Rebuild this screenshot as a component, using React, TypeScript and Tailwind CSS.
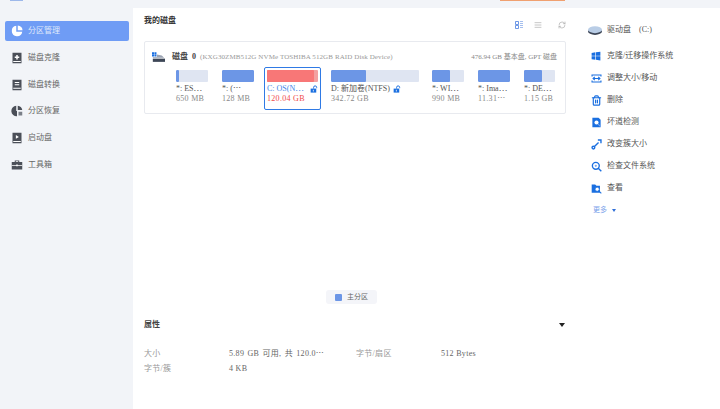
import { Trash2, RefreshCw, AlignJustify } from 'lucide-react'
import type { ReactNode } from 'react'

const cjk = 'font-["Liberation_Serif","Noto_Sans_CJK_SC",serif]'

function Sq({ children }: { children: ReactNode }) {
  return (
    <svg viewBox="0 0 16 16" className="h-[12px] w-[12px] shrink-0">
      {children}
    </svg>
  )
}

function OpenLock() {
  return (
    <svg viewBox="0 0 10 10" className="h-[8px] w-[8px] shrink-0">
      <path d="M4.5 4.5V3a1.9 1.9 0 0 1 3.8 0v1" fill="none" stroke="#1a6fe0" strokeWidth="1.2" />
      <path d="M0.8 4.5h7v5h-7z" fill="#1a6fe0" />
      <path d="M3.6 6h1v2h-1z" fill="#fff" />
    </svg>
  )
}

const navItems: { label: string; active?: boolean; icon: ReactNode }[] = [
  {
    label: '分区管理',
    active: true,
    icon: (
      <svg viewBox="0 0 16 16" className="h-[12px] w-[12px]">
        <path d="M7 1a7 7 0 1 0 8 8H7z" fill="#fff" />
        <path d="M9 0.6V7h6.4A7 7 0 0 0 9 0.6z" fill="#fff" />
      </svg>
    ),
  },
  {
    label: '磁盘克隆',
    icon: (
      <Sq>
        <path d="M2 1h12v14H2z" fill="#4b4f58" />
        <path d="M7 4h2v2h2v2H9v2H7V8H5V6h2zM3 12h10v1.4H3z" fill="#fff" />
      </Sq>
    ),
  },
  {
    label: '磁盘转换',
    icon: (
      <Sq>
        <path d="M2 1h12v14H2z" fill="#4b4f58" />
        <path d="M5 4h6v1.4H5zM5 7h6v1.4H5zM3 11.5h10V13H3z" fill="#fff" />
      </Sq>
    ),
  },
  {
    label: '分区恢复',
    icon: (
      <Sq>
        <path d="M7 1a7 7 0 1 0 1 14V8H7z" fill="#4b4f58" />
        <path d="M9 1v5.5h6A7 7 0 0 0 9 1z" fill="#4b4f58" />
        <path d="M10 9h5v5h-5z" fill="#7a7f88" />
      </Sq>
    ),
  },
  {
    label: '启动盘',
    icon: (
      <Sq>
        <path d="M2 1h12v14H2z" fill="#4b4f58" />
        <path d="M6.5 4l4 2.5-4 2.5zM3 12h10v1.4H3z" fill="#fff" />
      </Sq>
    ),
  },
  {
    label: '工具箱',
    icon: (
      <Sq>
        <path d="M5 2h6v2h4v10H1V4h4z" fill="#4b4f58" />
        <path d="M6.4 3h3.2v1H6.4zM1 8h14v1H1zM7 7.4h2v2.4H7z" fill="#fff" />
      </Sq>
    ),
  },
]

const partitions = [
  { name: '*: ES⋯', size: '650 MB', w: 'w-[32px]', fill: 'w-[3px]' },
  { name: '*: (⋯', size: '128 MB', w: 'w-[32px]', fill: 'w-full' },
]

const partitionsRight = [
  { name: '*: WI⋯', size: '990 MB', w: 'w-[32px]', fill: 'w-[18px]', gap: 'ml-[13px]' },
  { name: '*: Ima⋯', size: '11.31⋯', w: 'w-[32px]', fill: 'w-full', gap: 'ml-[14px]' },
  { name: '*: DE⋯', size: '1.15 GB', w: 'w-[31px]', fill: 'w-[18px]', gap: 'ml-[14px]' },
]

function Partition({ name, size, w, fill, className = '' }: { name: string; size: string; w: string; fill: string; className?: string }) {
  return (
    <div className={`${w} ${className} shrink-0`}>
      <div className="h-[12px] overflow-hidden rounded-[1px] bg-[#dfe5f2]">
        <div className={`h-full rounded-[1px] bg-[#6c96e6] ${fill}`} />
      </div>
      <div className="mt-[1px] whitespace-nowrap text-[8px] leading-[11px] text-[#555]">{name}</div>
      <div className="mt-[-1px] whitespace-nowrap text-[8px] leading-[11px] tracking-[0.3px] text-[#888]">{size}</div>
    </div>
  )
}

const actions: { label: string; icon: ReactNode }[] = [
  {
    label: '克隆/迁移操作系统',
    icon: (
      <svg viewBox="0 0 16 16" className="h-[10px] w-[10px]">
        <path d="M1 3l6-1v5.5H1zM8 2l7-1v6.5H8zM1 8.5h6V14l-6-1zM8 8.5h7V15l-7-1z" fill="#1a6fe0" />
      </svg>
    ),
  },
  {
    label: '调整大小/移动',
    icon: (
      <svg viewBox="0 0 16 16" className="h-[11px] w-[11px]" fill="none" stroke="#1a6fe0" strokeWidth="1.6">
        <path d="M1.5 5V3h13v2M1.5 11v2h13v-2" />
        <path d="M3 8h10M5.5 5.5 3 8l2.5 2.5M10.5 5.5 13 8l-2.5 2.5" />
      </svg>
    ),
  },
  { label: '删除', icon: <Trash2 className="h-[11px] w-[11px] text-[#1a6fe0]" strokeWidth={2.6} /> },
  {
    label: '坏道检测',
    icon: (
      <svg viewBox="0 0 16 16" className="h-[11px] w-[11px]">
        <path d="M2 1h9l3 3v11H2z" fill="#1a6fe0" />
        <circle cx="8" cy="8" r="3" fill="#fff" />
        <path d="M10 10l4 4" stroke="#7aa7ee" strokeWidth="1.6" />
      </svg>
    ),
  },
  {
    label: '改变簇大小',
    icon: (
      <svg viewBox="0 0 16 16" className="h-[11px] w-[11px]" fill="none" stroke="#1a6fe0" strokeWidth="2">
        <path d="M5 11l6-6" />
        <circle cx="3.5" cy="12.5" r="2" />
        <path d="M10 1.5h4.5V6" />
      </svg>
    ),
  },
  {
    label: '检查文件系统',
    icon: (
      <svg viewBox="0 0 16 16" className="h-[11px] w-[11px]" fill="none">
        <circle cx="7" cy="7" r="5" stroke="#1a6fe0" strokeWidth="2" />
        <path d="M10.5 10.5 15 15" stroke="#1a6fe0" strokeWidth="2" />
        <circle cx="7" cy="7" r="1.6" fill="#7aa7ee" />
      </svg>
    ),
  },
  {
    label: '查看',
    icon: (
      <svg viewBox="0 0 16 16" className="h-[11px] w-[11px]">
        <path d="M1 2h5l2 2h5v10H1z" fill="#1a6fe0" />
        <circle cx="9" cy="9" r="3" fill="#fff" stroke="#1a6fe0" />
        <path d="M11 11l4 4" stroke="#1a6fe0" strokeWidth="1.6" />
      </svg>
    ),
  },
]

export default function App() {
  return (
    <div className={`flex h-[409px] w-[720px] flex-col overflow-hidden bg-[#f2f4f8] ${cjk}`}>
      <div className="flex h-[8px] shrink-0 items-start">
        <div className="ml-[10px] h-[1px] w-[13px] bg-[#9db8ea]" />
        <div className="ml-[477px] h-[1px] w-[65px] bg-[#f0a070]" />
      </div>
      <div className="flex min-h-0 flex-1">
        <aside className="w-[133px] shrink-0 bg-[#f2f4f8] pl-[5px] pr-[4px] pt-[13px]">
          {navItems.map((item) => (
            <div
              key={item.label}
              className={`mb-[6.8px] flex h-[20px] items-center gap-[5px] rounded-[2px] pl-[6px] text-[8px] ${
                item.active ? 'bg-[#6f9cf5] text-[#dfe8fb]' : 'text-[#666]'
              }`}
            >
              {item.icon}
              <span className="text-[8px]">{item.label}</span>
            </div>
          ))}
        </aside>

        <main className="flex w-[442px] shrink-0 flex-col bg-white pl-[11px] pr-[9px]">
          <div className="flex h-[26px] shrink-0 items-center justify-between">
            <span className="text-[8px] font-bold text-[#333]">我的磁盘</span>
            <div className="mt-[8px] flex items-center">
              <svg viewBox="0 0 8 8" className="h-[8px] w-[8px]">
                <path d="M0.5 0.5h3v3h-3zM0.5 4.5h3v3h-3z" fill="none" stroke="#4a7fe0" strokeWidth="0.8" />
                <path d="M5 0.5h3M5 2.5h3M5 4.5h3M5 6.5h3" stroke="#9bb8ec" strokeWidth="0.9" />
              </svg>
              <AlignJustify className="ml-[11px] h-[8px] w-[8px] text-[#aaa]" />
              <RefreshCw className="ml-[16px] h-[8px] w-[8px] text-[#aaa]" />
            </div>
          </div>

          <section className="mt-[7px] h-[73px] shrink-0 rounded-[2px] border border-[#e8eaef] pl-[7px] pr-[8px] pt-[8px]">
            <div className="flex h-[14px] items-center">
              <svg viewBox="0 0 16 12" className="h-[10px] w-[13px] shrink-0">
                <path d="M0 0h2.5v2.5H0zM3 0h2.5v2.5H3zM0 3h2.5v2.5H0zM3 3h2.5v2.5H3z" fill="#1a6fe0" />
                <path d="M6 3l6 1 3 3H1V6h5z" fill="#9aa3b2" />
                <path d="M1 8h15v4H1z" fill="#3d4656" />
              </svg>
              <span className="ml-[7px] text-[8px] font-bold text-[#444] [word-spacing:2px]">磁盘 0</span>
              <span className="ml-[4px] whitespace-nowrap text-[7px] tracking-[0.1px] text-[#999]">
                (KXG30ZMB512G NVMe TOSHIBA 512GB RAID Disk Device)
              </span>
              <span className="ml-auto whitespace-nowrap text-[7px] text-[#888]">476.94 GB 基本盘, GPT 磁盘</span>
            </div>
            <div className="ml-[24px] mt-[6px] flex items-start">
              <Partition {...partitions[0]} />
              <Partition {...partitions[1]} className="ml-[14px]" />
              <div className="ml-[10px] mt-[-3px] h-[43px] w-[57px] shrink-0 rounded-[2px] border-[1.5px] border-[#2f7ae5] px-[2px] pt-[2px]">
                <div className="h-[12px] rounded-[1px] bg-[#f3a0a0]">
                  <div className="h-full w-[47px] rounded-[1px] bg-[#f87777]" />
                </div>
                <div className="mt-[1px] flex items-center justify-between">
                  <span className="whitespace-nowrap text-[8px] leading-[11px] text-[#3f87e8]">C: OS(N⋯</span>
                  <OpenLock />
                </div>
                <div className="mt-[-1px] whitespace-nowrap text-[8px] leading-[11px] tracking-[0.3px] text-[#ef4a4a]">120.04 GB</div>
              </div>
              <div className="ml-[10px] w-[88px] shrink-0">
                <div className="h-[12px] overflow-hidden rounded-[1px] bg-[#dfe5f2]">
                  <div className="h-full w-[35px] rounded-[1px] bg-[#6c96e6]" />
                </div>
                <div className="mt-[1px] flex items-center gap-[3px]">
                  <span className="whitespace-nowrap text-[8px] leading-[11px] text-[#555]">D: 新加卷(NTFS)</span>
                  <OpenLock />
                </div>
                <div className="mt-[-1px] whitespace-nowrap text-[8px] leading-[11px] tracking-[0.3px] text-[#888]">342.72 GB</div>
              </div>
              {partitionsRight.map((p) => (
                <Partition key={p.name} name={p.name} size={p.size} w={p.w} fill={p.fill} className={p.gap} />
              ))}
            </div>
          </section>

          <div className="flex-1" />

          <div className="flex justify-center">
            <div className="mr-[7px] flex h-[14px] items-center gap-[5px] rounded-[3px] bg-[#f4f5f9] px-[9px] text-[7px] text-[#666]">
              <span className="h-[7px] w-[7px] rounded-[1px] bg-[#6c96e6]" />
              主分区
            </div>
          </div>

          <div className="mt-[15px] flex items-center justify-between pr-[1px]">
            <span className="text-[8px] font-bold text-[#444]">属性</span>
            <span className="h-0 w-0 border-x-[3px] border-t-[4px] border-x-transparent border-t-[#222]" />
          </div>

          <div className="mb-[35px] mt-[17px] grid grid-cols-[85px_127px_85px_1fr] gap-y-[4px] text-[8px] leading-[11px] tracking-[0.3px] text-[#666]">
            <span className="text-[#999]">大小</span>
            <span className="whitespace-nowrap [word-spacing:1px]">5.89 GB 可用, 共 120.0⋯</span>
            <span className="text-[#999]">字节/扇区</span>
            <span>512 Bytes</span>
            <span className="text-[#999]">字节/簇</span>
            <span>4 KB</span>
          </div>
        </main>

        <aside className="flex-1 bg-white pl-[13px] pt-[15px]">
          <div className="flex h-[14px] items-center gap-[5px] text-[8px] text-[#555]">
            <svg viewBox="0 0 16 10" className="h-[9px] w-[14px] shrink-0">
              <ellipse cx="8" cy="6" rx="8" ry="4" fill="#3d4656" />
              <ellipse cx="8" cy="4" rx="8" ry="4" fill="#b9cde6" />
            </svg>
            <span className="[word-spacing:6px]">驱动盘 (C:)</span>
          </div>
          <div className="mt-[12px] flex flex-col gap-[8px] pl-[3px]">
            {actions.map((a) => (
              <div key={a.label} className="flex h-[14px] items-center text-[8px] text-[#555]">
                <span className="flex w-[16px] shrink-0 items-center">{a.icon}</span>
                <span className="whitespace-nowrap">{a.label}</span>
              </div>
            ))}
          </div>
          <div className="ml-[5px] mt-[10px] flex items-center gap-[5px] text-[7px] text-[#7aa2ea]">
            更多
            <span className="h-0 w-0 border-x-[2.5px] border-t-[3px] border-x-transparent border-t-[#2f6fd8]" />
          </div>
        </aside>
      </div>
    </div>
  )
}
